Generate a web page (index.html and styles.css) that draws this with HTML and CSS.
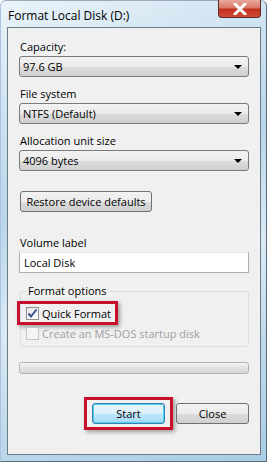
FILE: index.html
```html
<!DOCTYPE html>
<html lang="en">
<head>
    <meta charset="UTF-8">
    <meta name="viewport" content="width=device-width, initial-scale=1.0">
    <title>Format Local Disk (D:)</title>
    <link rel="stylesheet" href="styles.css">
</head>
<body>
    <div class="window">
        <!-- Title bar -->
        <div class="titlebar">
            <span class="title">Format Local Disk (D:)</span>
            <span class="close-btn">
                <svg width="14" height="12" viewBox="0 0 14 12">
                    <path d="M2 1 L12 11 M12 1 L2 11" stroke="#fff" stroke-width="3" stroke-linecap="square"/>
                </svg>
            </span>
        </div>

        <div class="client">
            <div class="label">Capacity:</div>
            <div class="select"><span>97.6 GB</span><span class="arrow"></span></div>

            <div class="label">File system</div>
            <div class="select"><span>NTFS (Default)</span><span class="arrow"></span></div>

            <div class="label">Allocation unit size</div>
            <div class="select"><span>4096 bytes</span><span class="arrow"></span></div>

            <div class="restore-row">
                <span class="button restore">Restore device defaults</span>
            </div>

            <div class="label">Volume label</div>
            <div class="textbox">Local Disk</div>

            <!-- Format options group -->
            <div class="group">
                <span class="legend">Format options</span>
                <div class="highlight">
                    <div class="check-row">
                        <span class="checkbox checked">
                            <svg width="11" height="11" viewBox="0 0 11 11">
                                <path d="M1.5 5.5 L4 8.5 L9.5 1.5" stroke="#3b4f8f" stroke-width="2" fill="none"/>
                            </svg>
                        </span>
                        <span>Quick Format</span>
                    </div>
                </div>
                <div class="check-row disabled">
                    <span class="checkbox"></span>
                    <span>Create an MS-DOS startup disk</span>
                </div>
            </div>

            <div class="progress"></div>

            <div class="actions">
                <span class="start-wrap"><span class="button start">Start</span></span>
                <span class="button close">Close</span>
            </div>
        </div>
    </div>
</body>
</html>
```

FILE: styles.css
```css
body {
    margin: 0;
    font-family: "Open Sans", "DejaVu Sans", sans-serif;
    font-size: 11px;
    color: #000;
}
.window {
    width: 267px;
    height: 462px;
    box-sizing: border-box;
    display: flex;
    flex-direction: column;
    border-radius: 6px 6px 0 0;
    border: 1px solid #5a6b7e;
    border-top-color: #9aaabb;
    border-left-color: #a9c4dc;
    background: linear-gradient(160deg, #eaf3f9 0%, #cfe3f1 20%, #b8d6ea 40%, #dbeaf4 60%, #bcd8ea 80%, #a8cde4 100%);
}
.titlebar {
    height: 26px;
    display: flex;
    justify-content: space-between;
    align-items: flex-start;
}
.title {
    padding: 6px 0 0 7px;
    font-size: 12px;
    white-space: nowrap;
}
.close-btn {
    width: 41px;
    height: 17px;
    margin-right: 5px;
    margin-top: -1px;
    display: flex;
    align-items: center;
    justify-content: center;
    border: 1px solid #5b2a28;
    border-top: none;
    border-radius: 0 0 4px 4px;
    background: linear-gradient(#e7a89c 0%, #d9786a 45%, #c0321f 55%, #d24b33 100%);
}
.client {
    flex: 1;
    margin: 0 5px 6px 6px;
    border: 1px solid #6d7a88;
    background: #f0f0f0;
    padding: 9px 11px 0 11px;
    display: flex;
    flex-direction: column;
}
.label {
    height: 15px;
    line-height: 15px;
    margin: 2px 0 2px 1px;
    white-space: nowrap;
}
.select {
    height: 19px;
    margin-bottom: 7px;
    border: 1px solid #7a7a7a;
    border-radius: 3px;
    background: linear-gradient(#f2f2f2 0%, #ebebeb 50%, #dddddd 51%, #cfcfcf 100%);
    display: flex;
    justify-content: space-between;
    align-items: center;
    padding: 0 6px 0 3px;
}
.arrow {
    width: 0;
    height: 0;
    border-left: 4px solid transparent;
    border-right: 4px solid transparent;
    border-top: 4px solid #000;
}
.restore-row {
    margin: 13px 0 21px 1px;
    display: flex;
}
.button {
    height: 19px;
    border: 1px solid #707070;
    border-radius: 3px;
    background: linear-gradient(#f2f2f2 0%, #ebebeb 50%, #dddddd 51%, #cfcfcf 100%);
    display: flex;
    align-items: center;
    justify-content: center;
    white-space: nowrap;
}
.restore {
    width: 130px;
}
.textbox {
    height: 19px;
    line-height: 19px;
    border: 1px solid #abadb3;
    border-top-color: #e3e9ef;
    background: #fff;
    padding-left: 4px;
}
.group {
    position: relative;
    margin: 18px 0 0 1px;
    padding: 9px 5px 0 5px;
    height: 45px;
    border: 1px solid #d5dfe5;
    border-radius: 3px;
}
.legend {
    position: absolute;
    top: -9px;
    left: 5px;
    padding: 0 2px;
    line-height: 16px;
    background: #f0f0f0;
}
.highlight {
    display: inline-flex;
    margin: 0 0 0 -9px;
    padding: 1px 4px 1px 6px;
    border: 3px solid #c8102e;
    box-shadow: 2px 2px 4px rgba(0, 0, 0, 0.35);
}
.check-row {
    display: flex;
    align-items: center;
    gap: 3px;
    height: 16px;
    white-space: nowrap;
}
.checkbox {
    width: 11px;
    height: 11px;
    border: 1px solid #8f8f8f;
    background: linear-gradient(135deg, #e6e6e6, #fff);
    display: flex;
}
.check-row.disabled {
    color: #a0a0a0;
}
.check-row.disabled .checkbox {
    border-color: #c5c5c5;
    background: #f4f4f4;
}
.progress {
    height: 10px;
    margin-top: 15px;
    border: 1px solid #b2b2b2;
    border-radius: 3px;
    background: linear-gradient(#f7f7f7, #e2e2e2 50%, #d6d6d6);
}
.actions {
    display: flex;
    justify-content: flex-end;
    align-items: center;
    gap: 3px;
    margin-top: 23px;
}
.start-wrap {
    padding: 3px 5px;
    border: 3px solid #c8102e;
    box-shadow: 2px 2px 4px rgba(0, 0, 0, 0.35);
}
.start {
    width: 71px;
    border-color: #3c7fb1;
    box-shadow: inset 0 0 0 1px #48d0f0;
    background: linear-gradient(#eaf6fd 0%, #d9f0fc 50%, #bee6fd 51%, #a7d9f5 100%);
}
.close {
    width: 71px;
}
```
